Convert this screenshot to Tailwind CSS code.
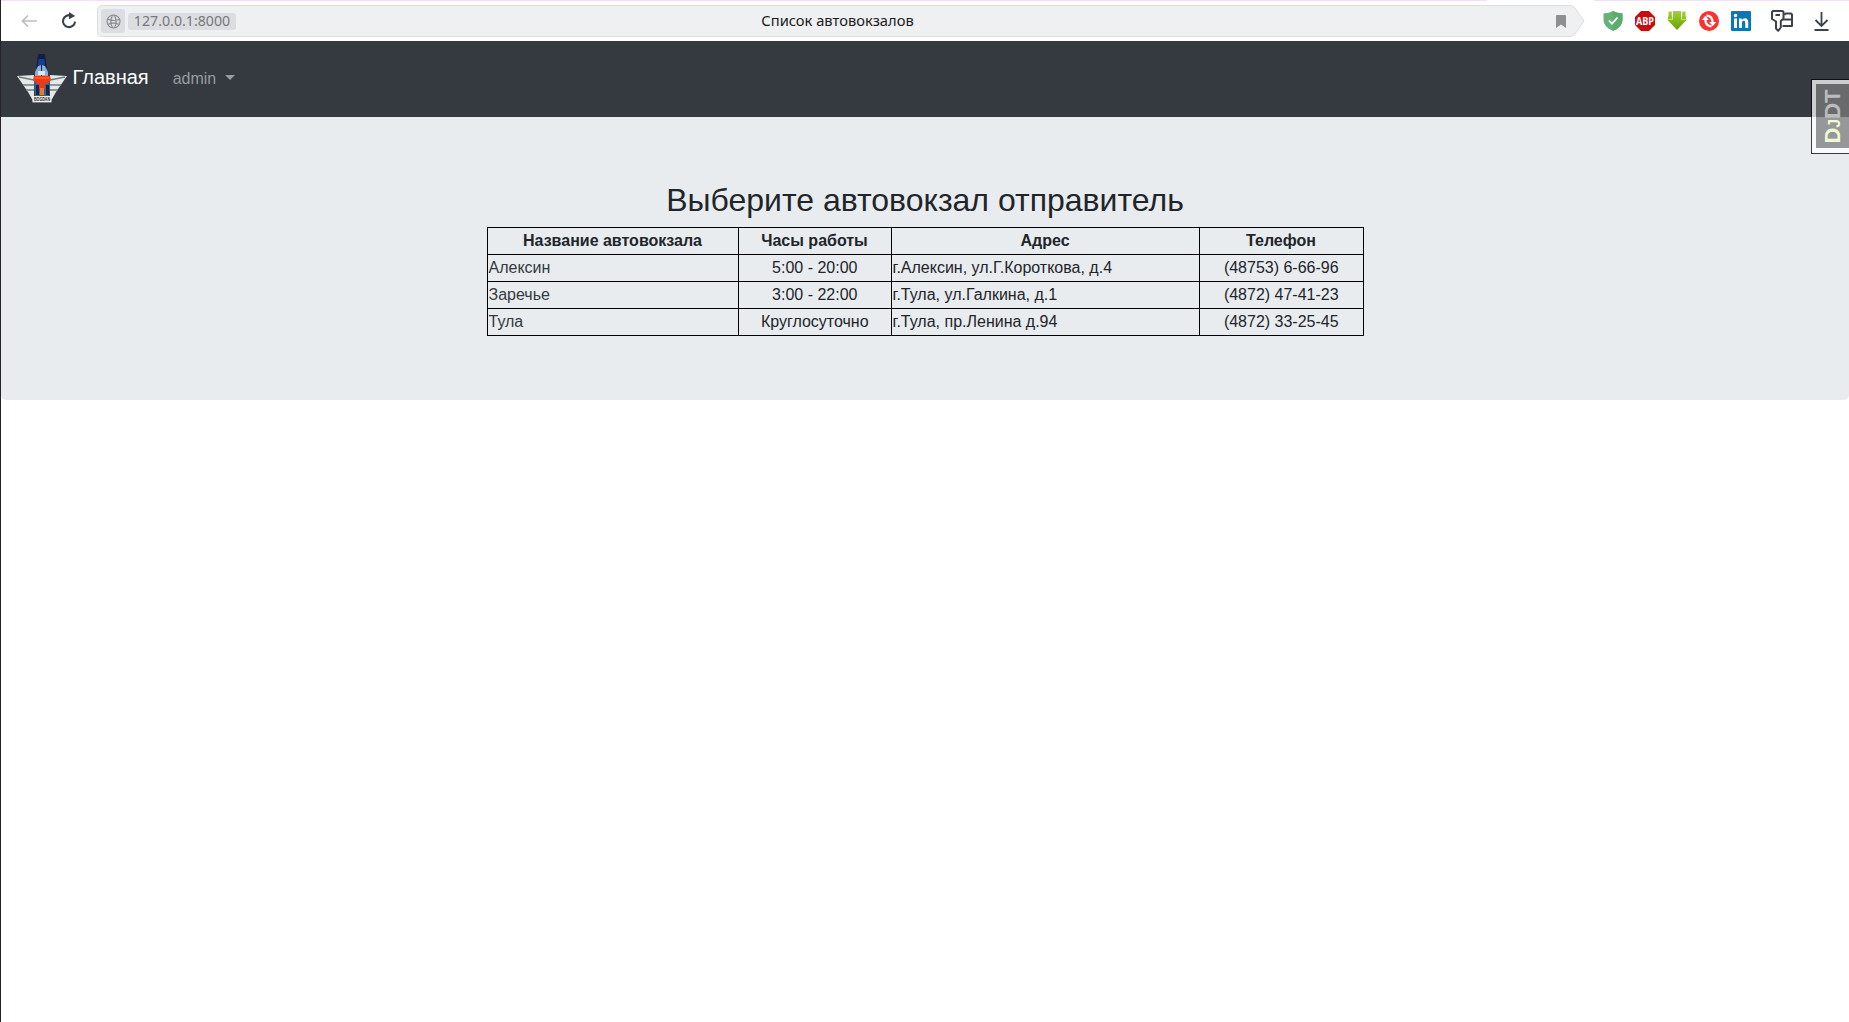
<!DOCTYPE html>
<html lang="ru">
<head>
<meta charset="utf-8">
<title>Список автовокзалов</title>
<script src="https://cdn.jsdelivr.net/npm/@tailwindcss/browser@4"></script>
</head>
<body class="h-[1022px] overflow-hidden border-l border-[#2a1f2d] bg-white font-['Liberation_Sans',sans-serif] text-base text-[#212529]">
<!-- Browser toolbar -->
<div class="flex h-px justify-between"><div class="w-[1486px] bg-[#f3defa]"></div><div class="w-[255px] bg-[#f3defa]"></div></div>
<header class="flex h-10 items-start pt-1 font-['Noto_Sans',sans-serif]">
  <svg class="mt-[8px] ml-[20px] h-4 w-4 shrink-0" viewBox="0 0 16 16" fill="none" stroke="#bbbdc0" stroke-width="1.7"><path d="M16 8H1.5M7 2.5L1.5 8L7 13.5"/></svg>
  <svg class="mt-[7px] ml-[24px] h-[18px] w-4 shrink-0" viewBox="0 0 16 18" fill="none"><path d="M10.5 3.7A6 6 0 1 0 14 9.6" stroke="#3a424a" stroke-width="2.1"/><path d="M8 0L14.2 4L8 7.2Z" fill="#3a424a"/></svg>
  <div class="relative ml-[20px] h-8 w-[1488px] shrink-0">
    <svg class="absolute inset-0 h-8 w-[1488px]" viewBox="0 0 1488 32"><path d="M5.500 .5H1473Q1476 .5 1478 3L1487 16L1478 29Q1476 31.500 1473 31.500H5.500Q.5 31.500 .5 26.500V5.500Q.5 .5 5.500 .5Z" fill="#eff0f2" stroke="#dcdde0"/></svg>
    <div class="relative flex h-8 items-center">
      <div class="ml-1 flex h-6 w-6 items-center justify-center rounded-[3px] bg-[#dcdde0]">
        <svg class="h-[15px] w-[15px]" viewBox="0 0 15 15" fill="none" stroke="#8b8c8e" stroke-width="1.1"><circle cx="7.500" cy="7.500" r="6.500"/><path d="M1.500 5Q7.500 8 13.800 5.200M1.800 10.500Q7.500 7.800 13.200 10.500M6.800 1Q2.800 7.500 6.800 14M8.200 1Q12.200 7.500 8.200 14"/></svg>
      </div>
      <div class="ml-[3px] flex h-[17px] w-[108px] items-center justify-center rounded-[3px] bg-[#dcdde0] text-[14.2px] leading-none text-[#77787a]"><span>127.0.0.1:8000</span></div>
      <div class="ml-[525px] flex w-[153px] justify-center pb-0.5 text-[14.700px] leading-none whitespace-nowrap text-[#1c1c1c]">Список автовокзалов</div>
      <svg class="ml-[642px] h-[13px] w-[10px]" viewBox="0 0 10 13"><path d="M0 1Q0 0 1 0H9Q10 0 10 1V13L5 9.500L0 13Z" fill="#8e8f91"/></svg>
    </div>
  </div>
  <div class="mt-[5px] ml-[18px] flex items-center">
    <svg class="h-5 w-5" viewBox="0 0 20 20"><path d="M10 0Q14 2 19.500 2.500V9Q19.500 16 10 20Q.5 16 .5 9V2.500Q6 2 10 0Z" fill="#67b279"/><path d="M10 0Q14 2 19.500 2.500V9Q19.500 16 10 20Z" fill="#5dac6d"/><path d="M6 9.500L9 12.700L14.500 6.500" fill="none" stroke="#fff" stroke-width="1.8"/></svg>
    <svg class="ml-3 h-5 w-5" viewBox="0 0 20 20"><path d="M6 0H14L20 6V14L14 20H6L0 14V6Z" fill="#c70d0d"/><text x="10" y="13.700" text-anchor="middle" font-family="Open Sans, sans-serif" font-weight="700" font-size="9.800" textLength="18" lengthAdjust="spacingAndGlyphs" fill="#fff">ABP</text></svg>
    <svg class="ml-3 h-5 w-5" viewBox="0 0 20 20"><defs><linearGradient id="g" x2="0" y2="1"><stop stop-color="#a8cf3c"/><stop offset="1" stop-color="#65a300"/></linearGradient></defs><path d="M1.500 .5H4.800V6H1.500ZM6 0H14V8.500H20L10 19L0 8.500H6ZM15.200 .5H18.500V6H15.200Z" fill="url(#g)"/><path d="M1 5.500H5.400V8H1ZM14.600 5.500H19V8H14.600Z" fill="#8fc42a"/></svg>
    <svg class="ml-3 h-5 w-5" viewBox="0 0 20 20"><circle cx="10" cy="10" r="10" fill="#f9322f"/><g fill="none" stroke="#fff" stroke-width="2.400"><path d="M12.500 15.200Q6.500 15.500 6.300 8"/><path d="M7.500 4.800Q13.500 4.500 13.700 12"/></g><path d="M2.800 9L6.300 4.800L9.800 9ZM17.200 11L13.700 15.200L10.200 11Z" fill="#fff"/></svg>
    <svg class="ml-3 h-5 w-5" viewBox="0 0 20 20"><rect width="20" height="20" rx="1" fill="#0a78b5"/><path d="M3 7.500H6V17H3ZM8 7.500H10.800V9Q11.800 7.200 14 7.200Q17.200 7.200 17.200 11V17H14.300V12Q14.300 9.700 12.600 9.700Q10.900 9.700 10.900 12V17H8Z" fill="#fff"/><circle cx="4.500" cy="4.500" r="1.700" fill="#fff"/></svg>
    <svg class="ml-5 h-[22px] w-[22px]" viewBox="0 0 22 22" fill="none" stroke="#3a424a" stroke-width="2" stroke-linejoin="round"><path d="M2 1H11.500L12.500 2V8.500L9.800 11V17.500L7.200 20.800L5 18.500V11.500L1 9V2Z"/><path d="M4.500 5H9M13.500 5L14.500 3.500H20L21 4.500V16H11.500M12 9.500H21"/></svg>
    <svg class="ml-[21px] h-5 w-[15px]" viewBox="0 0 15 20" fill="none" stroke="#3a424a" stroke-width="1.800"><path d="M7.500 1V14.500M1.500 9L7.500 15L13.500 9M.5 19H14.500"/></svg>
  </div>
</header>

<nav class="flex h-[76px] items-center bg-[#343a40] px-4">
  <svg class="h-[50px] w-[50px]" viewBox="0 0 50 50">
    <path d="M21 0H28L30 16H19Z" fill="#14213d"/><path d="M22 2H27L28 11H21Z" fill="#173f92"/><path d="M21.500 2H27.500V5H21.500Z" fill="#0b1d4d"/>
    <path d="M21 12L24 11V22H18V18ZM25 11L28 12L31 18V22H25Z" fill="#86afe0"/><path d="M21 17H28V21H21Z" fill="#dce8f0"/>
    <path d="M0 22L17 21V45H15L11 38Z" fill="#e4e9e7"/><path d="M50 22L33 21V45H35L39 38Z" fill="#e4e9e7"/>
    <path d="M2 23L17 26M6 31H17M9 36H17M48 23L33 26M44 31H33M41 36H33" stroke="#717b7d" stroke-width="1.300"/>
    <path d="M17 27H33L32 42H18Z" fill="#2865a8"/><path d="M19 31H22V41H19ZM29 31H32V41H29Z" fill="#142846"/>
    <path d="M17 22H33L34 26L30 30H28V35H22V30H20L16 26Z" fill="#ee3b16"/><path d="M18 24H32" stroke="#ff7045" stroke-width="1"/>
    <path d="M23 34H27V41H23Z" fill="#ef742c"/>
    <path d="M15 42H35L34.500 48H15.500Z" fill="#eceee9"/><path d="M15.500 48.500H34.500" stroke="#747b7e"/>
    <text x="25" y="47" text-anchor="middle" font-family="Liberation Sans, sans-serif" font-size="5" font-weight="700" textLength="16" lengthAdjust="spacingAndGlyphs" fill="#252525">BOGDAN</text>
  </svg>
  <a class="ml-[5.500px] pb-1 text-xl leading-[30px] text-white">Главная</a>
  <a class="ml-6 flex items-center pb-px text-base text-[#999c9f]">admin<span class="mb-[2px] ml-[9px] h-0 w-0 border-x-[5px] border-t-[5px] border-x-transparent border-t-[#999c9f]"></span></a>
</nav>

<main class="flex h-[283px] flex-col items-center rounded-b-[5px] bg-[#e9ecef] pt-16">
  <h2 class="mb-2 text-[32px] leading-[38.400px] font-normal">Выберите автовокзал отправитель</h2>
  <table class="ml-px w-[877px] table-fixed border-collapse text-center leading-6 [&_td]:border [&_td]:border-black [&_td]:py-px [&_td]:pr-px [&_td]:pl-[0.5px] [&_th]:border [&_th]:border-black [&_th]:py-px [&_th]:pr-px [&_th]:pl-0">
    <colgroup><col class="w-[251px]"><col class="w-[153px]"><col class="w-[308px]"><col class="w-[164px]"></colgroup>
    <tr><th>Название автовокзала</th><th>Часы работы</th><th>Адрес</th><th>Телефон</th></tr>
    <tr><td class="text-left text-[#343a40]">Алексин</td><td>5:00 - 20:00</td><td class="text-left">г.Алексин, ул.Г.Короткова, д.4</td><td>(48753) 6-66-96</td></tr>
    <tr><td class="text-left text-[#343a40]">Заречье</td><td>3:00 - 22:00</td><td class="text-left">г.Тула, ул.Галкина, д.1</td><td>(4872) 47-41-23</td></tr>
    <tr><td class="text-left text-[#343a40]">Тула</td><td>Круглосуточно</td><td class="text-left">г.Тула, пр.Ленина д.94</td><td>(4872) 33-25-45</td></tr>
  </table>
</main>

<!-- Debug toolbar handle -->
<div class="absolute top-[79px] right-0 flex h-[75px] w-[38px] border border-r-0 border-black bg-white pt-1 pb-[5px] pl-1 opacity-75">
  <div class="flex w-full items-center justify-center bg-[#7b7b7b] pl-[3px]">
    <div class="-rotate-90 font-['Liberation_Sans',sans-serif] text-[22px] leading-none font-bold whitespace-nowrap text-[#e8e8e8]"><span class="text-[#efffd0]">D<span class="text-base">J</span></span>DT</div>
  </div>
</div>
</body>
</html>
